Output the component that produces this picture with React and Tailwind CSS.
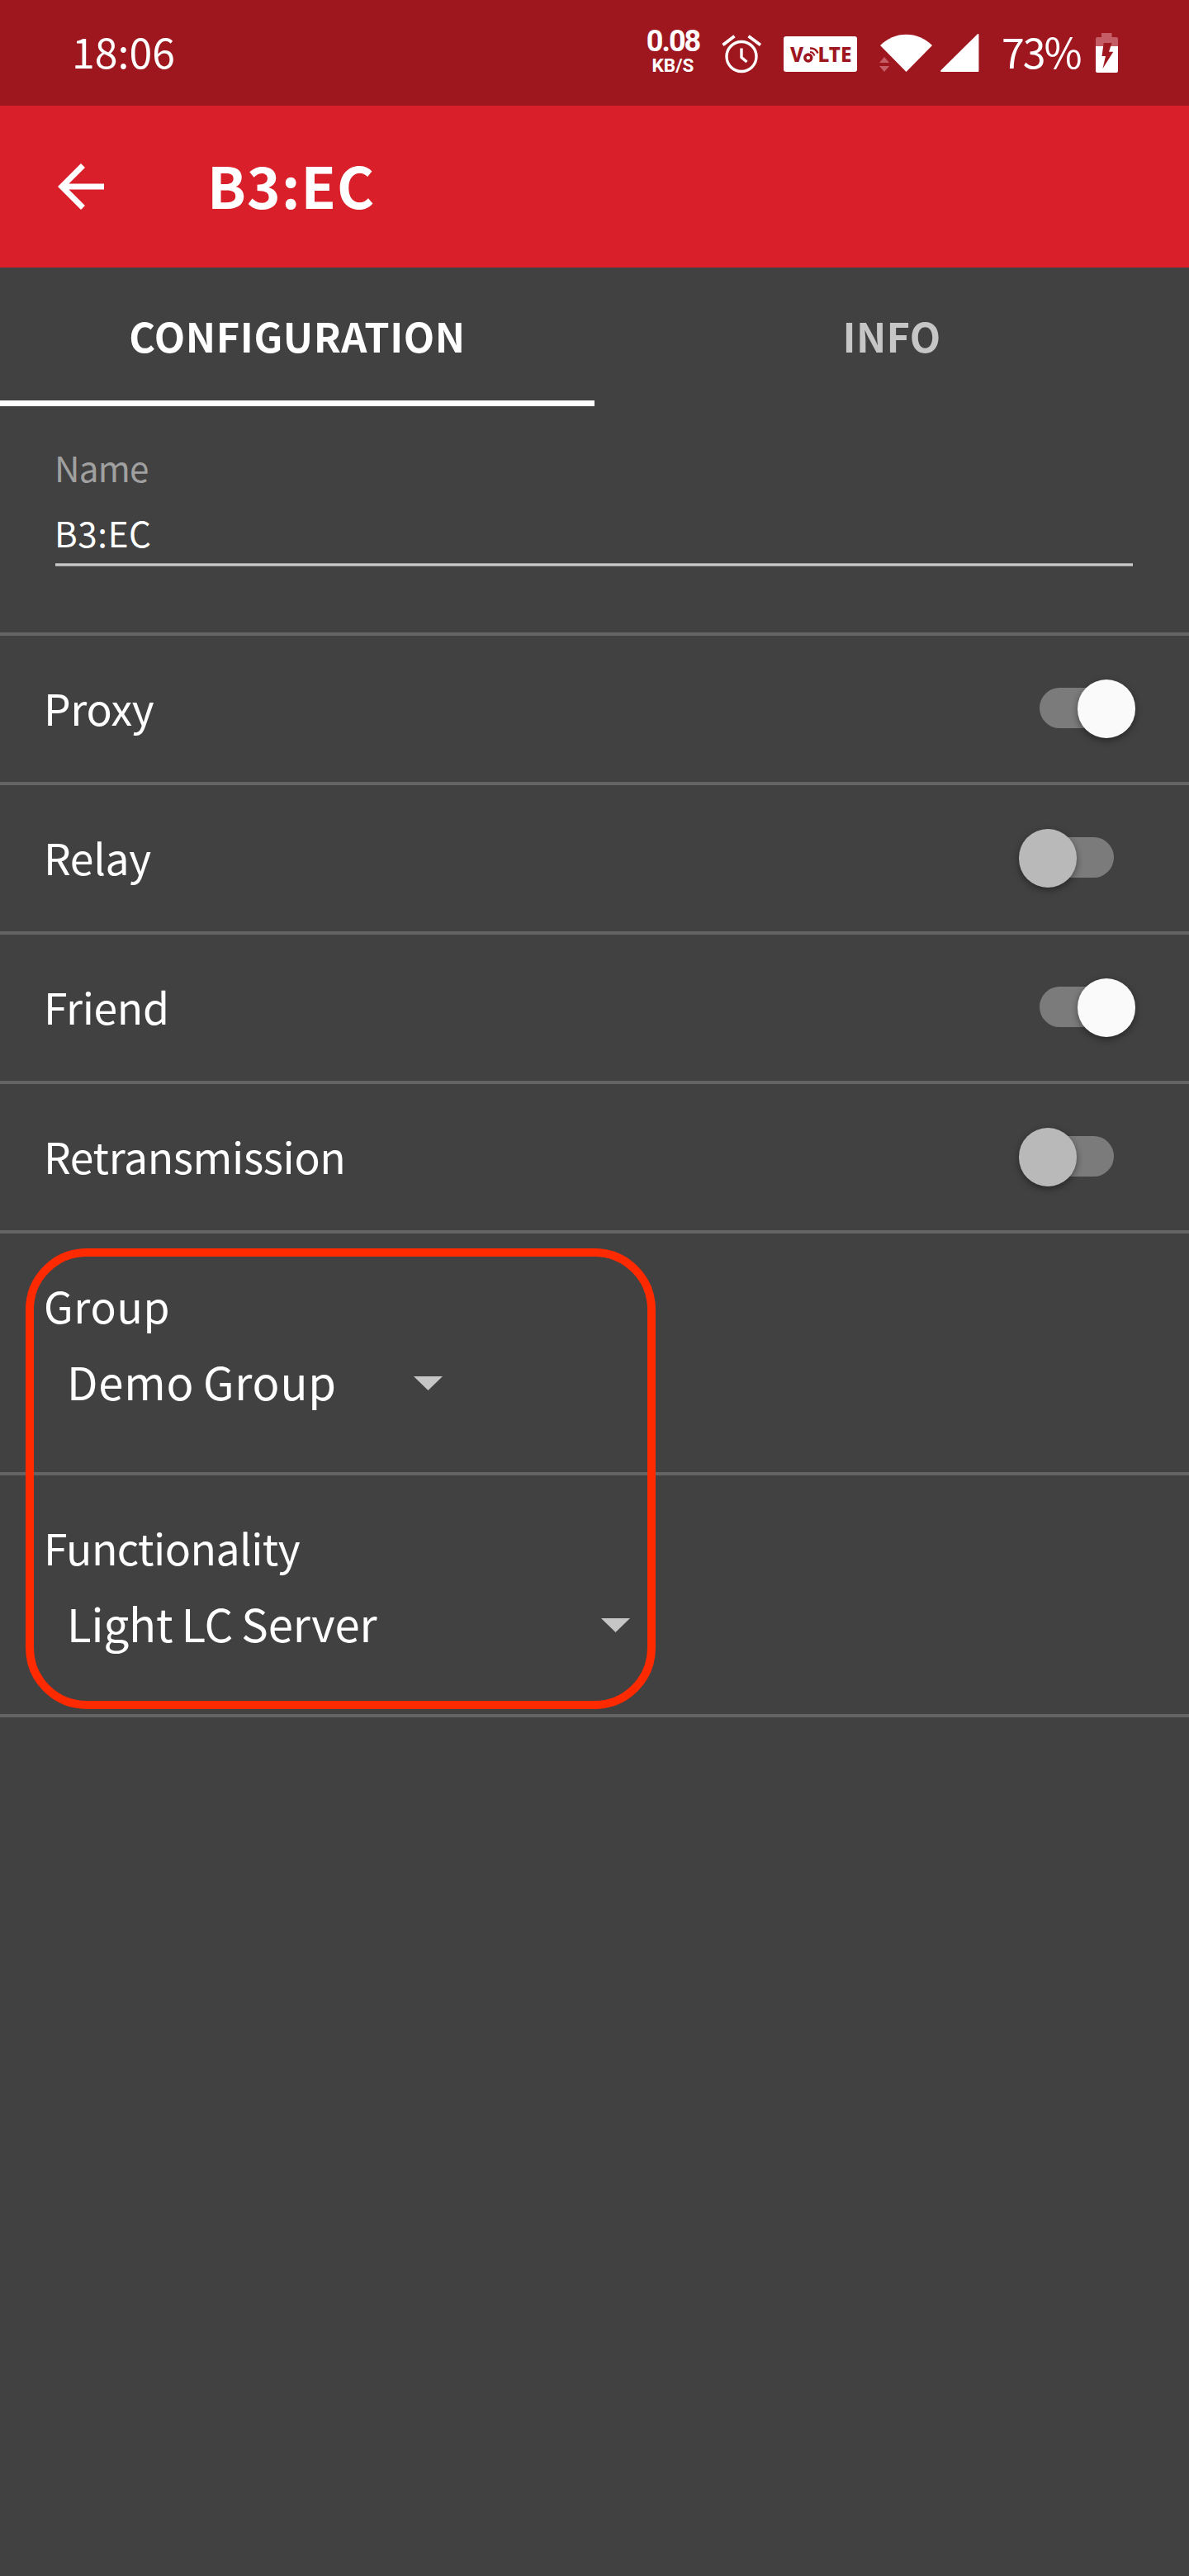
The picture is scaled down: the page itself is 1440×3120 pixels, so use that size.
const toggles = [
  { label: 'Proxy', on: true },
  { label: 'Relay', on: false },
  { label: 'Friend', on: true },
  { label: 'Retransmission', on: false },
];

function StatusBar() {
  return (
    <div className="flex h-32 items-start bg-[#9e171e] pl-[87px] pr-[86px]">
      <div className="mt-[33px] text-[50px] leading-[56px]">18:06</div>
      <div className="ml-auto mt-8 flex w-[70px] flex-col items-center whitespace-nowrap font-['Roboto',sans-serif] font-bold">
        <span className="text-[36px] leading-[37px] tracking-[-2px]">0.08</span>
        <span className="text-[22.5px] leading-[20px]">KB/S</span>
      </div>
      <svg className="ml-[22px] mt-[38px] h-[54px] w-[53px] shrink-0" viewBox="872 38 53 54" fill="none" stroke="#fff" strokeWidth="3.4">
        <circle cx="898" cy="68.5" r="18" />
        <path d="M898 58.500V69.500L904.500 75" />
        <path d="M875.500 54.500L889.500 43.800M906.500 43.800L921 54.500" strokeWidth="3.800" />
      </svg>
      <svg className="ml-6 mt-11 h-[43px] w-[89px] shrink-0" viewBox="949 44 89 43">
        <rect x="949" y="44" width="89" height="43" rx="3" fill="#fff" />
        <g fill="#9e171e" fontFamily="Noto Sans, sans-serif" fontWeight="800" fontSize="24">
          <text x="957" y="74.700">V</text>
          <text x="990.500" y="74.700" textLength="41" lengthAdjust="spacingAndGlyphs">LTE</text>
        </g>
        <g fill="none" stroke="#9e171e">
          <circle cx="978.800" cy="70" r="4" strokeWidth="3.400" />
          <path d="M981 63Q985 63 986.500 67.500" strokeWidth="2" />
          <path d="M981 58.500Q988 58 990.500 64.500" strokeWidth="2.400" />
        </g>
      </svg>
      <svg className="ml-[22px] mt-[38px] h-[54px] w-[72px] shrink-0" viewBox="1060 38 72 54">
        <path d="M1066 55A44 44 0 0 1 1129 55L1097.500 87Z" fill="#fff" />
        <path d="M1065 76L1071 69L1077 76ZM1065 80H1077L1071 87Z" fill="#c45d66" />
      </svg>
      <svg className="ml-[5px] mt-[38px] h-[54px] w-[51px] shrink-0" viewBox="1137 38 51 54">
        <path d="M1140 86L1184.500 42V86Z" fill="#fff" stroke="#fff" strokeWidth="1.800" strokeLinejoin="round" />
      </svg>
      <div className="ml-[25px] mt-[33px] w-[98px] text-[50px] leading-[56px] tracking-[-2px]">73%</div>
      <svg className="ml-4 mt-[38px] h-[54px] w-[27px] shrink-0" viewBox="1327 38 27 54">
        <path d="M1327 56V47Q1327 45 1329 45H1334V40H1346.500V45H1352Q1354 45 1354 47V56Z" fill="#c45d66" />
        <path d="M1327 56H1354V86Q1354 88 1352 88H1329Q1327 88 1327 86Z" fill="#fff" />
        <path d="M1336.700 52H1346.500L1343 62.700H1348.300L1335.500 83L1339 68H1334.500Z" fill="#9e171e" />
      </svg>
    </div>
  );
}

function Toggle({ on }) {
  return (
    <div className="relative mb-[2px] h-[49px] w-[90px] rounded-full bg-[#7b7b7b]">
      <div
        className={
          on
            ? 'absolute -top-[10px] left-[45.5px] size-[70.5px] rounded-full bg-[#fafafa] shadow-[0_3px_8px_rgba(0,0,0,0.4)]'
            : 'absolute -top-[10px] left-[-25.5px] size-[70.5px] rounded-full bg-[#b9b9b9] shadow-[0_3px_8px_rgba(0,0,0,0.4)]'
        }
      />
    </div>
  );
}

function Caret() {
  return (
    <svg className="mt-[5px] h-[17px] w-[35px]" viewBox="0 0 35 17">
      <path d="M0 0H35L17.500 17Z" fill="#c6c6c6" />
    </svg>
  );
}

function Select({ label, labelClass, value, valueClass, widthClass }) {
  return (
    <div className="h-[293px] border-b-4 border-[#646464] pl-[53px] pt-[57px]">
      <div className={`text-[51.7px] leading-[60px] ${labelClass}`}>{label}</div>
      <div className={`ml-7 mt-[30px] flex items-center justify-between whitespace-nowrap text-[54.5px] leading-[64px] ${widthClass}`}>
        <span className={valueClass}>{value}</span>
        <Caret />
      </div>
    </div>
  );
}

export default function App() {
  return (
    <div className="h-[3120px] w-[1440px] overflow-hidden bg-[#414141] font-['Noto_Sans_CJK_SC',sans-serif] text-white">
      <StatusBar />
      <header className="flex h-[196px] items-center bg-[#d9202a] pl-14">
        <svg className="size-[84px]" viewBox="0 0 24 24" fill="#fff">
          <path d="M20 11H7.830l5.590-5.590L12 4l-8 8 8 8 1.410-1.410L7.830 13H20v-2z" />
        </svg>
        <h1 className="mb-[6px] ml-[111px] text-[69px] leading-[80px] font-bold tracking-[1.1px]">B3:EC</h1>
      </header>
      <nav className="grid h-[168px] grid-cols-2 text-center text-[48.6px] leading-[60px] font-bold">
        <div className="border-b-[7px] border-white pt-[52px] tracking-[0.6px]">CONFIGURATION</div>
        <div className="pt-[52px] tracking-[0.3px] text-[#c6c6c6]">INFO</div>
      </nav>
      <section className="h-[278px] border-b-4 border-[#646464] px-[67px] pt-[49px] text-[42.2px] leading-[50px]">
        <div className="-ml-px tracking-[-0.75px] text-[#a0a0a0]">Name</div>
        <div className="-ml-px mt-[29px] tracking-[0.6px]">B3:EC</div>
        <div className="mr-[1px] mt-3 h-1 border-y border-[#a2a2a2] bg-[#c8c8c8]" />
      </section>
      {toggles.map((t) => (
        <div key={t.label} className="flex h-[181px] items-center justify-between border-b-4 border-[#646464] pl-[53px] pr-[91px]">
          <span className="mb-1 text-[51.7px] leading-[60px] tracking-[-0.38px]">{t.label}</span>
          <Toggle on={t.on} />
        </div>
      ))}
      <section className="relative">
        <Select label="Group" labelClass="tracking-[0.7px]" value="Demo Group" valueClass="tracking-[0.8px] [word-spacing:-2.5px]" widthClass="w-[455px]" />
        <Select label="Functionality" labelClass="tracking-[-0.55px]" value="Light LC Server" valueClass="tracking-[-0.1px] [word-spacing:-2px]" widthClass="w-[682px]" />
        <div className="absolute left-[31px] top-[18px] h-[558px] w-[763px] rounded-[74px] border-[10.5px] border-[#ff2a00]" />
      </section>
    </div>
  );
}
